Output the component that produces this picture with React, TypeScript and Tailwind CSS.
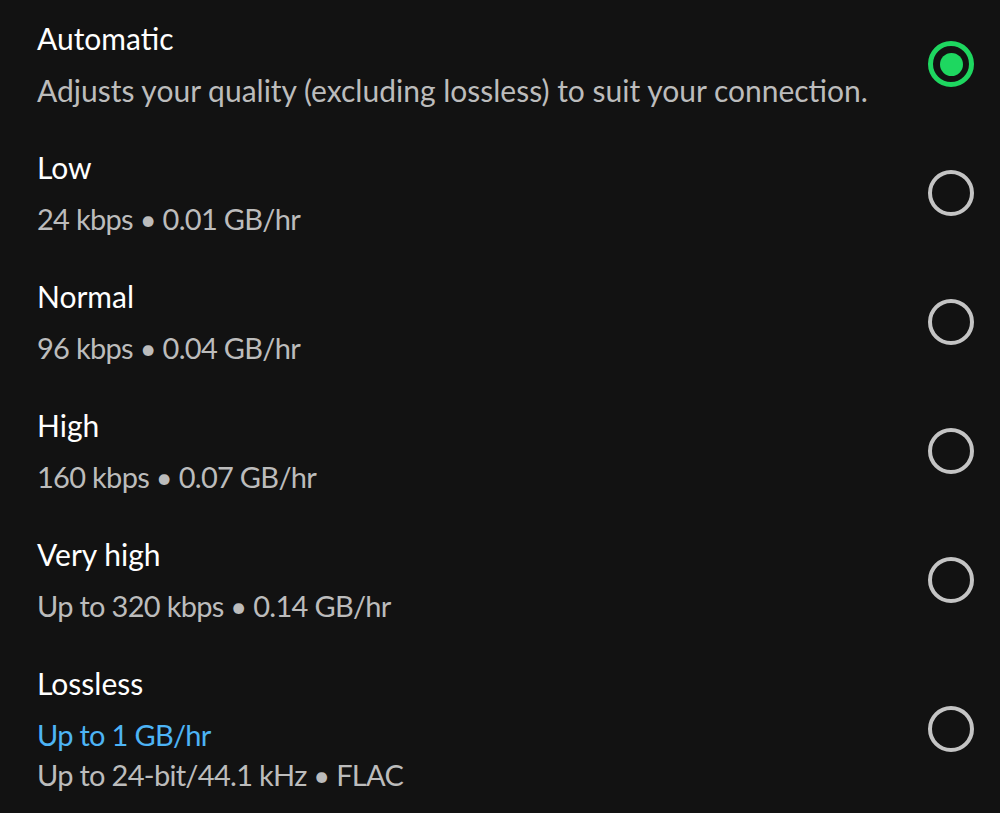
import React from "react";

type Line = { text: string; blue?: boolean; tight?: boolean };
type Row = { title: string; lines: Line[]; selected?: boolean };

const rows: Row[] = [
  { title: "Automatic", lines: [{ text: "Adjusts your quality (excluding lossless) to suit your connection." }], selected: true },
  { title: "Low", lines: [{ text: "24 kbps • 0.01 GB/hr", tight: true }] },
  { title: "Normal", lines: [{ text: "96 kbps • 0.04 GB/hr", tight: true }] },
  { title: "High", lines: [{ text: "160 kbps • 0.07 GB/hr", tight: true }] },
  { title: "Very high", lines: [{ text: "Up to 320 kbps • 0.14 GB/hr", tight: true }] },
  {
    title: "Lossless",
    lines: [
      { text: "Up to 1 GB/hr", blue: true, tight: true },
      { text: "Up to 24-bit/44.1 kHz • FLAC", tight: true },
    ],
  },
];

function Radio({ selected }: { selected?: boolean }) {
  return selected ? (
    <div className="w-[46px] h-[46px] shrink-0 rounded-full border-[5px] border-[#1ed760] flex items-center justify-center">
      <div className="w-[23px] h-[23px] rounded-full bg-[#1ed760]" />
    </div>
  ) : (
    <div className="w-[46px] h-[46px] shrink-0 rounded-full border-[4px] border-[#c4c4c4]" />
  );
}

export default function App() {
  return (
    <div className="w-[1000px] h-[813px] bg-[#121212] overflow-hidden" style={{ fontFamily: "Lato, 'Open Sans', sans-serif" }}>
      {rows.map((r) => (
        <div key={r.title} className="flex items-center pt-[18px] pb-[19px] pl-[37px] pr-[26px]">
          <div className="flex-1 flex flex-col">
            <div className="text-[30px] leading-[40px] text-white mb-[12px]">{r.title}</div>
            {r.lines.map((l) => (
              <div
                key={l.text}
                className={`leading-[40px] whitespace-nowrap ${l.tight ? "text-[29px] tracking-[-0.7px]" : "text-[30px]"} ${
                  l.blue ? "text-[#4db4f5]" : "text-[#bcbcbc]"
                }`}
              >
                {l.text}
              </div>
            ))}
          </div>
          <Radio selected={r.selected} />
        </div>
      ))}
    </div>
  );
}
